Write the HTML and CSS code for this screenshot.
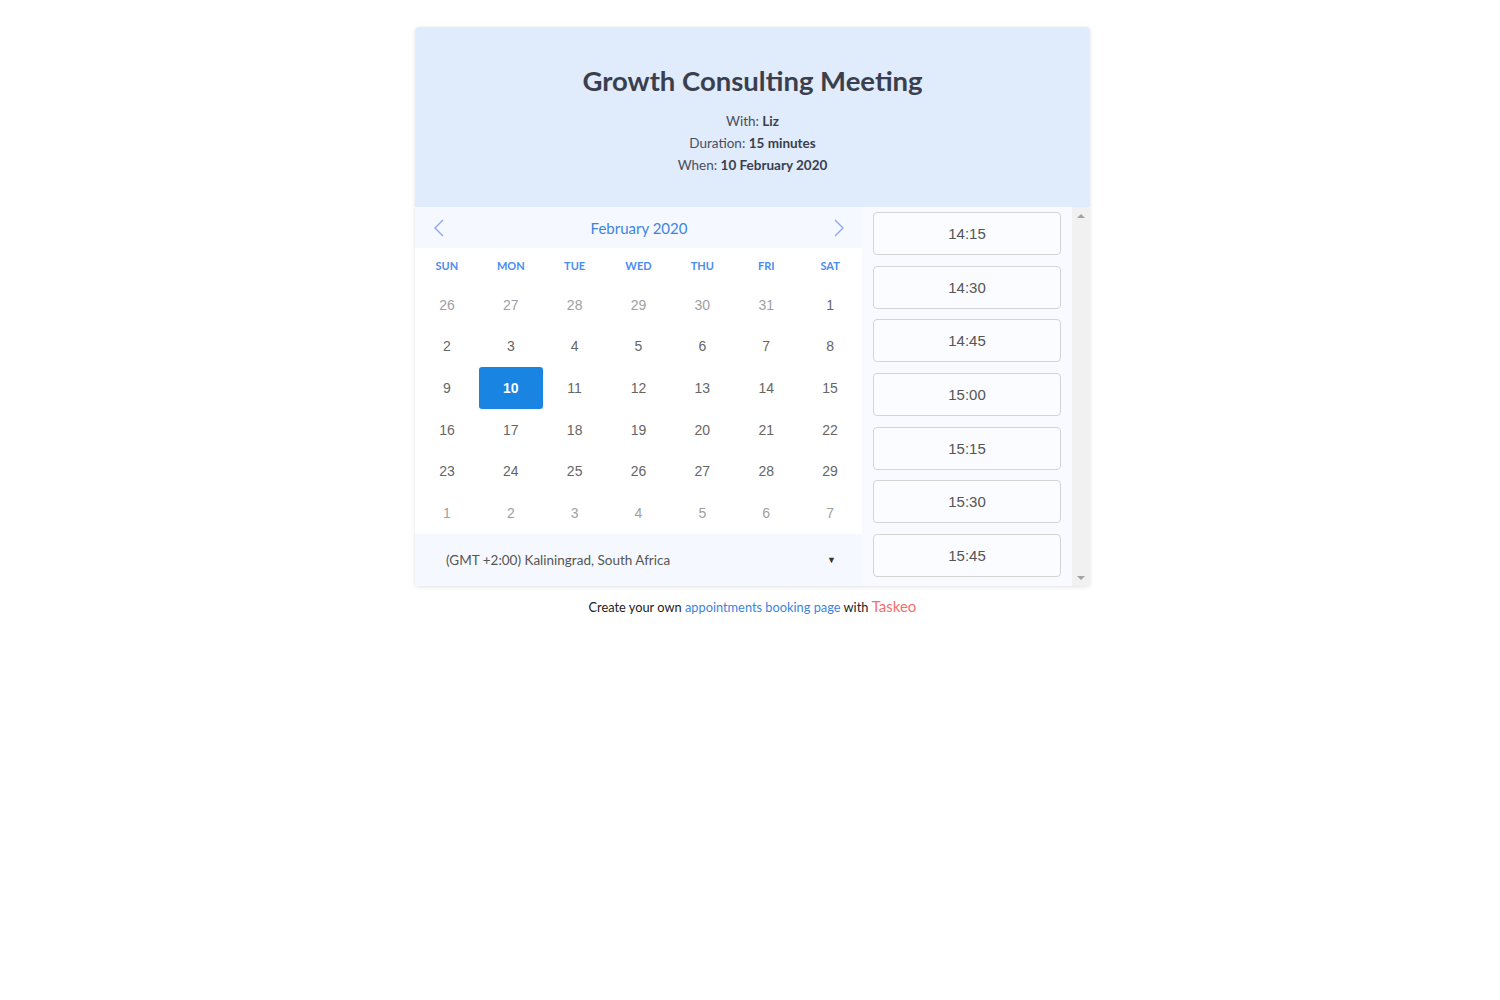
FILE: index.html
```html
<!DOCTYPE html>
<html lang="en">
<head>
    <meta charset="UTF-8">
    <title>Growth Consulting Meeting</title>
    <link rel="stylesheet" href="styles.css">
</head>
<body>
    <div class="booking">
        <div class="header">
            <h1>Growth Consulting Meeting</h1>
            <p>With: <b>Liz</b></p>
            <p>Duration: <b>15 minutes</b></p>
            <p>When: <b>10 February 2020</b></p>
        </div>
        <div class="content">
            <div class="calendar">
                <div class="month-nav">
                    <svg class="chevron" width="12" height="18" viewBox="0 0 12 18"><path d="M10 1 L2 9 L10 17" fill="none" stroke="#8fa6ef" stroke-width="1.4"/></svg>
                    <span class="month">February 2020</span>
                    <svg class="chevron" width="12" height="18" viewBox="0 0 12 18"><path d="M2 1 L10 9 L2 17" fill="none" stroke="#8fa6ef" stroke-width="1.4"/></svg>
                </div>
                <div class="weekdays">
                    <span>SUN</span><span>MON</span><span>TUE</span><span>WED</span><span>THU</span><span>FRI</span><span>SAT</span>
                </div>
                <div class="days">
                    <span class="other">26</span><span class="other">27</span><span class="other">28</span><span class="other">29</span><span class="other">30</span><span class="other">31</span><span>1</span>
                    <span>2</span><span>3</span><span>4</span><span>5</span><span>6</span><span>7</span><span>8</span>
                    <span>9</span><span class="selected">10</span><span>11</span><span>12</span><span>13</span><span>14</span><span>15</span>
                    <span>16</span><span>17</span><span>18</span><span>19</span><span>20</span><span>21</span><span>22</span>
                    <span>23</span><span>24</span><span>25</span><span>26</span><span>27</span><span>28</span><span>29</span>
                    <span class="other">1</span><span class="other">2</span><span class="other">3</span><span class="other">4</span><span class="other">5</span><span class="other">6</span><span class="other">7</span>
                </div>
                <div class="timezone">
                    <span>(GMT +2:00) Kaliningrad, South Africa</span>
                    <span class="caret">&#9660;</span>
                </div>
            </div>
            <div class="slots">
                <button>14:15</button>
                <button>14:30</button>
                <button>14:45</button>
                <button>15:00</button>
                <button>15:15</button>
                <button>15:30</button>
                <button>15:45</button>
            </div>
            <div class="scrollbar">
                <span class="arrow up"></span>
                <span class="arrow down"></span>
            </div>
        </div>
    </div>
    <p class="footer">Create your own <a href="#">appointments booking page</a> with <a class="brand" href="#">Taskeo</a></p>
</body>
</html>
```

FILE: styles.css
```css
* {
    margin: 0;
    padding: 0;
    box-sizing: border-box;
}

body {
    background-color: #fff;
    font-family: Lato, 'Open Sans', sans-serif;
    color: #444;
    padding: 27px 0 0 5px;
}

.booking {
    width: 675px;
    margin: 0 auto;
    border-radius: 4px;
    box-shadow: 0 1px 4px rgba(0, 0, 0, 0.12);
    overflow: hidden;
}

.header {
    background-color: #e0ebfc;
    height: 180px;
    text-align: center;
    padding-top: 36px;
}

.header h1 {
    font-size: 27.5px;
    font-weight: 700;
    color: #3a3f4d;
    line-height: 36px;
    margin-bottom: 11px;
}

.header p {
    font-size: 13.5px;
    line-height: 22px;
    color: #4a4f5c;
}

.header b {
    color: #3a3f4d;
}

.content {
    display: flex;
    height: 379px;
}

.calendar {
    width: 447px;
    background-color: #fff;
    display: flex;
    flex-direction: column;
}

.month-nav {
    background-color: #f5f9ff;
    height: 41px;
    display: flex;
    align-items: center;
    justify-content: space-between;
    padding: 0 17px 0 18px;
}

.month {
    color: #3d84e0;
    font-size: 15px;
}

.weekdays,
.days {
    display: grid;
    grid-template-columns: repeat(7, 1fr);
    text-align: center;
}

.weekdays {
    height: 36px;
    align-items: center;
    padding-bottom: 2px;
    font-size: 11px;
    font-weight: 700;
    color: #4a8cf0;
}

.days {
    grid-auto-rows: 41.6px;
    font-family: 'Liberation Sans', Arial, sans-serif;
    font-size: 14px;
    color: #666;
}

.days span {
    display: flex;
    align-items: center;
    justify-content: center;
    border-radius: 3px;
}

.days .other {
    color: #a0a0a0;
}

.days .selected {
    background-color: #1a84e3;
    color: #fff;
    font-weight: 700;
}

.timezone {
    flex: 1;
    background-color: #f5f9ff;
    display: flex;
    align-items: center;
    justify-content: space-between;
    padding: 0 26px 0 31px;
    font-size: 13.5px;
    color: #555;
}

.caret {
    font-size: 9px;
    color: #333;
}

.slots {
    width: 210px;
    background-color: #f8faff;
    padding: 5px 11px 0 11px;
    display: flex;
    flex-direction: column;
    gap: 10.7px;
}

.slots button {
    flex-shrink: 0;
    height: 43px;
    background-color: #fafcff;
    border: 1px solid #d4d4d4;
    border-radius: 4px;
    font-family: 'Liberation Sans', Arial, sans-serif;
    font-size: 15px;
    color: #555;
    cursor: pointer;
}

.scrollbar {
    flex: 1;
    background-color: #f1f1f1;
    display: flex;
    flex-direction: column;
    justify-content: space-between;
    align-items: center;
    padding: 7px 0 6px;
}

.arrow {
    width: 0;
    height: 0;
    border-left: 4px solid transparent;
    border-right: 4px solid transparent;
}

.arrow.up {
    border-bottom: 4px solid #a3a3a3;
}

.arrow.down {
    border-top: 4px solid #a3a3a3;
}

.footer {
    text-align: center;
    font-size: 12.8px;
    color: #222;
    margin-top: 11px;
}

.footer a {
    color: #3d84e0;
    text-decoration: none;
}

.footer .brand {
    color: #f86d6d;
    font-size: 15px;
}
```
